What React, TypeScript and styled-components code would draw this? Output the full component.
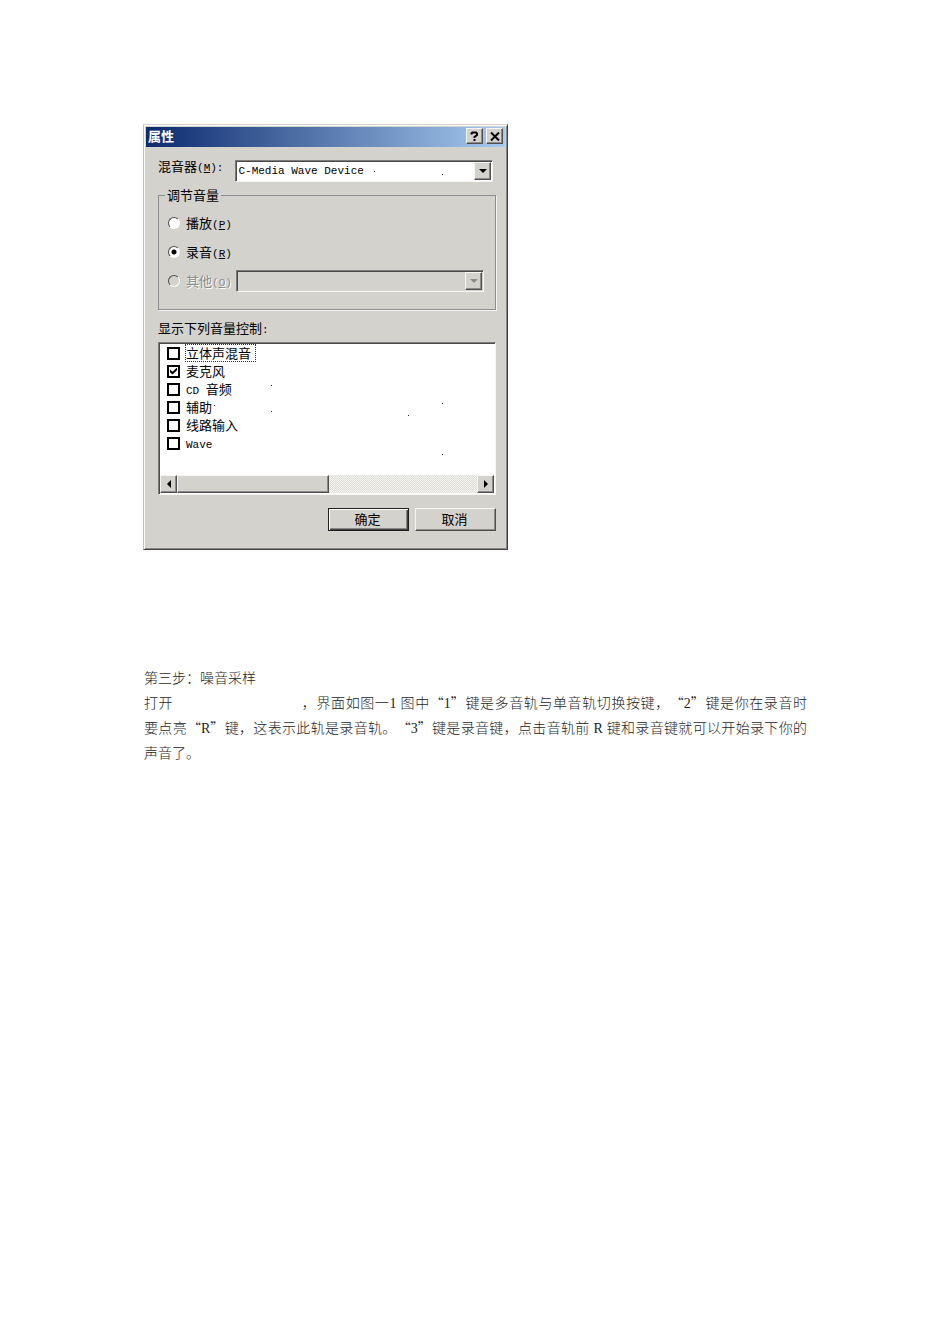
import React from "react";
import styled, { createGlobalStyle, css } from "styled-components";

const face = "#d4d2cd";

const GlobalStyle = createGlobalStyle`
  * { box-sizing: border-box; }
  body { margin: 0; background: #fff; }
`;

const raised = css`
  border: 1px solid;
  border-color: #f6f5f2 #505050 #505050 #f6f5f2;
  box-shadow: inset -1px -1px 0 #8c8b88;
`;

const sunken = css`
  border: 1px solid;
  border-color: #7c7b79 #f6f5f2 #f6f5f2 #7c7b79;
  box-shadow: inset 1px 1px 0 #4a4a4a;
`;

const Page = styled.main`
  padding: 124px 142px 64px 143px;
`;

const Dialog = styled.form`
  position: relative;
  width: 100%;
  max-width: 365px;
  padding: 2px 2px 18px;
  background: ${face};
  border: 1px solid;
  border-color: ${face} #404040 #404040 #c4c2be;
  box-shadow: inset 1px 1px 0 #fafaf8, inset -1px -1px 0 #8c8b88;
  color: #000;
  font: 13px/18px "Noto Sans CJK SC", sans-serif;
`;

const TitleBar = styled.header`
  display: flex;
  align-items: center;
  gap: 3px;
  height: 20px;
  padding: 0 2px 2px;
  background: linear-gradient(to right, #0c2a6e, #a6caf0);
`;

const Title = styled.h1`
  flex: 1;
  margin: 0;
  color: #fff;
  font-size: 13px;
  line-height: 18px;
`;

const CaptionButton = styled.button`
  ${raised}
  display: grid;
  place-items: center;
  width: 17px;
  height: 16px;
  padding: 0;
  background: ${face};
`;

const Body = styled.div`
  padding: 0 9px 0 12px;
`;

const Field = styled.div`
  display: flex;
  gap: 12px;
  padding: 10px 3px 0 0;
`;

const Latin = styled.span`
  font: 11px/11px "Liberation Mono", monospace;
`;

const Combo = styled.div`
  position: relative;
  flex: 1;
  height: 22px;
  margin-top: 3px;
`;

const Select = styled.select`
  ${sunken}
  appearance: none;
  display: block;
  width: 100%;
  height: 22px;
  padding: 0 20px 0 2px;
  border-radius: 0;
  background: ${(p) => (p.disabled ? face : "#fff")};
  color: #000;
  opacity: 1;
  font: 11px/20px "Liberation Mono", monospace;
`;

const DropArrow = styled.span`
  ${raised}
  position: absolute;
  top: 2px;
  right: 2px;
  display: grid;
  place-items: center;
  width: 17px;
  height: 18px;
  background: ${face};
  pointer-events: none;
`;

const Group = styled.fieldset`
  height: 124px;
  margin: 4px 0 0;
  padding: 4px 11px 0 9px;
  border: 1px solid #8c8b90;
  box-shadow: 1px 1px 0 #f6f5f2;
  min-width: 0;
`;

const Legend = styled.legend`
  margin-left: -3px;
  padding: 0 2px;
`;

const RadioRow = styled.div`
  display: flex;
  align-items: center;
  height: 29px;
  gap: 4px;

  & > ${Combo} { margin: 1px 0 0; }
`;

const RadioLabel = styled.label<{ $dim?: boolean }>`
  display: flex;
  align-items: center;
  gap: 6px;
  color: ${(p) => (p.$dim ? "#8c8b88" : "#000")};
  text-shadow: ${(p) => (p.$dim ? "1px 1px 0 #fff" : "none")};
`;

const Radio = styled.input`
  appearance: none;
  width: 12px;
  height: 12px;
  margin: 0;
  border: 1px solid;
  border-color: #4e4d4b #fff #fff #4e4d4b;
  border-radius: 50%;
  background: #fff;

  &:checked { background: radial-gradient(circle, #000 2px, #fff 3px); }
  &:disabled { background: ${face}; }
`;

const ListLabel = styled.div`
  height: 18px;
  margin: 9px 0 5px;
`;

const ListBox = styled.div`
  ${sunken}
  display: flex;
  flex-direction: column;
  justify-content: space-between;
  height: 153px;
  padding: 1px;
  background: #fff;
`;

const Items = styled.ul`
  margin: 0;
  padding: 0 0 0 7px;
  list-style: none;
`;

const Item = styled.li`
  display: flex;
  height: 18px;
`;

const ItemLabel = styled.label`
  display: flex;
  align-items: center;
  gap: 5px;
  height: 18px;
`;

const ItemText = styled.span<{ $focus?: boolean }>`
  height: 18px;
  padding: 0 5px 0 1px;
  line-height: 18px;
  outline: ${(p) => (p.$focus ? "1px dotted #333" : "none")};
  outline-offset: -1px;
`;

const Check = styled.input`
  appearance: none;
  display: grid;
  place-items: center;
  width: 13px;
  height: 13px;
  margin: 0;
  border: 2px solid #000;
  background: #fff;

  &:checked::after {
    content: "";
    width: 7px;
    height: 7px;
    background: #000;
    clip-path: polygon(0 30%, 36% 62%, 100% 0, 100% 38%, 36% 100%, 0 68%);
  }
`;

const ScrollBar = styled.div`
  display: flex;
  height: 18px;
  background: repeating-conic-gradient(#f4f4f1 0 25%, #dddcd7 0 50%) 0 0 / 2px 2px;
`;

const ScrollButton = styled.button`
  ${raised}
  display: grid;
  place-items: center;
  width: 17px;
  padding: 0;
  background: ${face};
`;

const Thumb = styled.div`
  ${raised}
  flex: 0 0 152px;
  margin-right: auto;
  background: ${face};
`;

const Actions = styled.footer`
  display: flex;
  justify-content: flex-end;
  gap: 6px;
  margin-top: 13px;
`;

const PushButton = styled.button<{ $primary?: boolean }>`
  ${raised}
  width: 81px;
  height: 23px;
  padding: 0 2px 2px 0;
  background: ${face};
  color: #000;
  font: 13px/18px "Noto Sans CJK SC", sans-serif;
  ${(p) =>
    p.$primary &&
    css`
      border-color: #202020;
      box-shadow: inset 1px 1px 0 #fff, inset -1px -1px 0 #404040, inset -2px -2px 0 #8c8b88;
    `}
`;

const Specks = styled.svg`
  position: absolute;
  top: -1px;
  left: -1px;
  pointer-events: none;
`;

const Article = styled.article`
  margin-top: 115px;
  padding: 0 1px;
  color: #1c1c1c;
  font: 300 14px/25px "Noto Sans CJK SC", sans-serif;
  text-spacing-trim: space-all;
`;

const Heading = styled.h2`
  margin: 0;
  font: inherit;
`;

const Paragraph = styled.p`
  margin: 0;
`;

const Line = styled.span<{ $last?: boolean }>`
  display: block;
  text-align: justify;
  text-align-last: ${(p) => (p.$last ? "left" : "justify")};
`;

const Blank = styled.span`
  display: inline-block;
  width: 128px;
`;

const Half = styled.span`
  font-family: "Liberation Serif", serif;
  line-height: 14px;
`;

function Triangle({ dir, color = "#000" }: { dir: "down" | "left" | "right"; color?: string }) {
  const points = { down: "0,0 8,0 4,4", left: "5,0 5,8 1,4", right: "1,0 1,8 5,4" }[dir];
  const down = dir === "down";
  return (
    <svg width={down ? 8 : 6} height={down ? 4 : 8} aria-hidden="true">
      <polygon points={points} fill={color} />
    </svg>
  );
}

function Hotkey({ letter }: { letter: string }) {
  return (
    <Latin>
      (<u>{letter}</u>)
    </Latin>
  );
}

const channels: { name: React.ReactNode; id: string; on?: boolean; focus?: boolean }[] = [
  { id: "stereo", name: "立体声混音", focus: true },
  { id: "mic", name: "麦克风", on: true },
  { id: "cd", name: <><Latin>CD </Latin>音频</> },
  { id: "aux", name: "辅助" },
  { id: "line", name: "线路输入" },
  { id: "wave", name: <Latin>Wave</Latin> },
];

const specks = [[231, 47], [299, 50], [128, 261], [128, 287], [71, 281], [299, 279], [265, 291], [299, 330]];

export default function App() {
  return (
    <>
      <GlobalStyle />
      <Page lang="zh-CN">
        <Dialog onSubmit={(e) => e.preventDefault()}>
          <TitleBar>
            <Title>属性</Title>
            <CaptionButton type="button" aria-label="帮助">
              <svg width="9" height="10" fill="none" stroke="#000" strokeWidth="2">
                <path d="M1.5 3.5V2.5L2.5 1.5H6L7 2.5V4L4.5 6V7M4.5 8V10" />
              </svg>
            </CaptionButton>
            <CaptionButton type="button" aria-label="关闭">
              <svg width="10" height="9" fill="none" stroke="#000" strokeWidth="2">
                <path d="M1 0.5L9 8.5M9 0.5L1 8.5" />
              </svg>
            </CaptionButton>
          </TitleBar>
          <Body>
            <Field>
              <label htmlFor="mixer">
                混音器<Hotkey letter="M" /><Latin>:</Latin>
              </label>
              <Combo>
                <Select id="mixer">
                  <option>C-Media Wave Device</option>
                </Select>
                <DropArrow><Triangle dir="down" /></DropArrow>
              </Combo>
            </Field>
            <Group>
              <Legend>调节音量</Legend>
              <RadioRow>
                <RadioLabel>
                  <Radio type="radio" name="volume" />
                  <span>播放<Hotkey letter="P" /></span>
                </RadioLabel>
              </RadioRow>
              <RadioRow>
                <RadioLabel>
                  <Radio type="radio" name="volume" defaultChecked />
                  <span>录音<Hotkey letter="R" /></span>
                </RadioLabel>
              </RadioRow>
              <RadioRow>
                <RadioLabel $dim>
                  <Radio type="radio" name="volume" disabled />
                  <span>其他<Hotkey letter="O" /></span>
                </RadioLabel>
                <Combo>
                  <Select disabled aria-label="其他" />
                  <DropArrow><Triangle dir="down" color="#8c8b88" /></DropArrow>
                </Combo>
              </RadioRow>
            </Group>
            <ListLabel id="channels">显示下列音量控制<Latin>:</Latin></ListLabel>
            <ListBox>
              <Items aria-labelledby="channels">
                {channels.map((c) => (
                  <Item key={c.id}>
                    <ItemLabel>
                      <Check type="checkbox" defaultChecked={c.on} />
                      <ItemText $focus={c.focus}>{c.name}</ItemText>
                    </ItemLabel>
                  </Item>
                ))}
              </Items>
              <ScrollBar>
                <ScrollButton type="button" aria-label="向左"><Triangle dir="left" /></ScrollButton>
                <Thumb />
                <ScrollButton type="button" aria-label="向右"><Triangle dir="right" /></ScrollButton>
              </ScrollBar>
            </ListBox>
            <Actions>
              <PushButton type="submit" $primary>确定</PushButton>
              <PushButton type="button">取消</PushButton>
            </Actions>
          </Body>
          <Specks width="365" height="426" aria-hidden="true">
            {specks.map(([x, y]) => (
              <rect key={`${x}-${y}`} x={x} y={y} width="1" height="1" fill="#222" />
            ))}
          </Specks>
        </Dialog>
        <Article>
          <Heading>第三步：噪音采样</Heading>
          <Paragraph>
            <Line>
              打开<Blank />，界面如图一<Half>1 </Half>图中“<Half>1</Half>”键是多音轨与单音轨切换按键，“<Half>2</Half>”键是你在录音时
            </Line>
            <Line>
              要点亮“<Half>R</Half>”键，这表示此轨是录音轨。“<Half>3</Half>”键是录音键，点击音轨前<Half> R </Half>键和录音键就可以开始录下你的
            </Line>
            <Line $last>声音了。</Line>
          </Paragraph>
        </Article>
      </Page>
    </>
  );
}
